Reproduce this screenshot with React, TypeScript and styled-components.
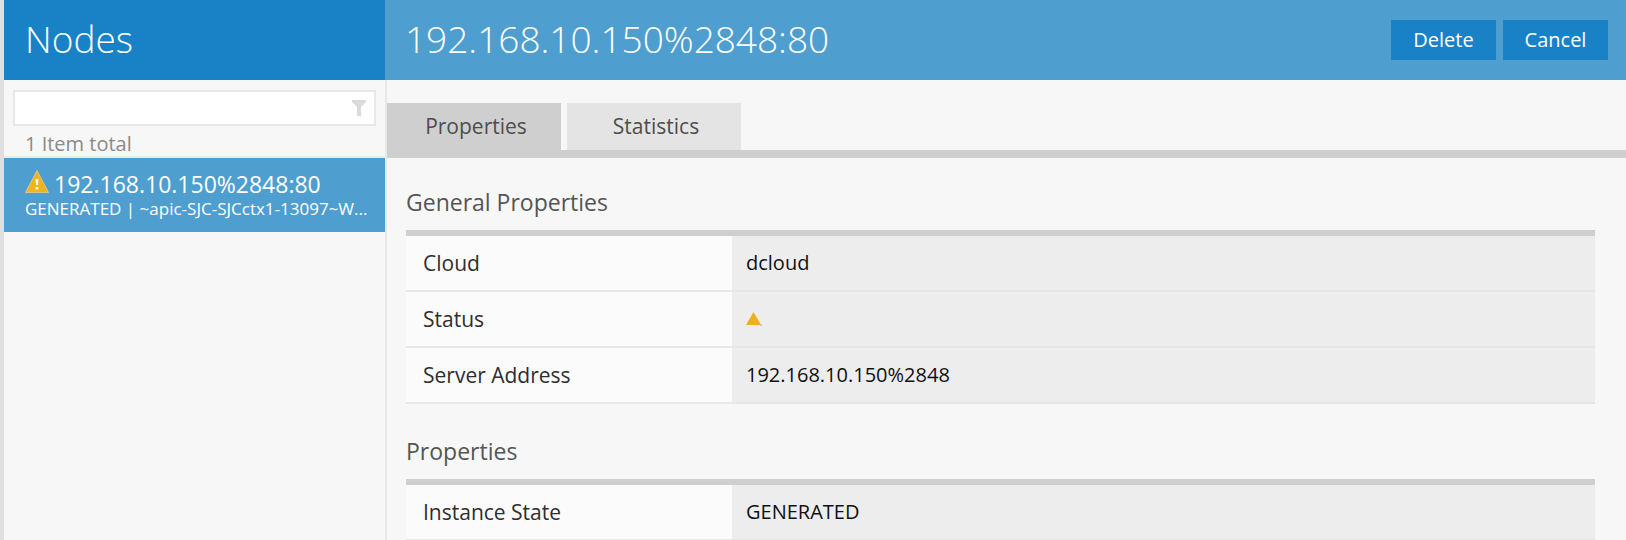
import React from "react";
import styled, { createGlobalStyle } from "styled-components";

const GlobalStyle = createGlobalStyle`
  *, *::before, *::after { box-sizing: border-box; }
  html, body { margin: 0; height: 100%; background: #f7f7f7; }
  body { overflow: hidden; font-family: "Open Sans", "Noto Sans", sans-serif; }
  #root { height: 100%; }
`;

const Page = styled.div`
  display: flex;
  height: 100vh;
  overflow: hidden;
  border-left: 4px solid #dfdfdf;
  background: #f7f7f7;
`;

const Sidebar = styled.aside`
  display: flex;
  flex-direction: column;
  flex: 0 0 381px;
  min-width: 0;
`;

const HeaderBar = styled.header<{ $tone: "dark" | "light" }>`
  display: flex;
  align-items: center;
  justify-content: space-between;
  height: 80px;
  padding: 0 18px 0 ${(p) => (p.$tone === "dark" ? "21px" : "20px")};
  background: ${(p) => (p.$tone === "dark" ? "#1982c7" : "#4e9ed0")};
`;

const Title = styled.h1`
  margin: 0;
  padding-bottom: 2px;
  color: #fff;
  font-size: 37px;
  font-weight: 300;
  line-height: 48px;
  white-space: nowrap;
`;

const SidebarBody = styled.div`
  flex: 1;
  border-right: 2px solid #e8e8e8;
  margin-right: -2px;
`;

const FilterBox = styled.div`
  display: flex;
  align-items: center;
  height: 36px;
  margin: 10px 9px 0 9px;
  padding-right: 8px;
  border: 2px solid #e8e8e8;
  background: #fff;
`;

const FilterInput = styled.input`
  flex: 1;
  min-width: 0;
  height: 32px;
  padding: 0 10px;
  border: 0;
  outline: 0;
  background: transparent;
  font: 400 18px "Open Sans", sans-serif;
`;

const ItemCount = styled.p`
  height: 32px;
  margin: 0;
  padding: 6px 21px 0;
  border-bottom: 2px solid #ebebeb;
  color: #8a8a8a;
  font-size: 20px;
  line-height: 24px;
`;

const NodeItem = styled.a`
  display: block;
  height: 74px;
  padding: 12px 10px 0 21px;
  background: #4e9ed0;
  color: #fff;
  text-decoration: none;
`;

const NodeName = styled.span`
  display: flex;
  align-items: flex-start;
  gap: 5px;
  font-size: 23px;
  line-height: 28px;
`;

const NodeInfo = styled.span`
  display: block;
  font-size: 17px;
  line-height: 22px;
  white-space: nowrap;
`;

const Main = styled.main`
  flex: 1;
  min-width: 0;
`;

const Actions = styled.div`
  display: flex;
  gap: 7px;
`;

const ActionButton = styled.button`
  width: 105px;
  height: 40px;
  padding: 0 0 2px;
  border: 0;
  background: #1982c7;
  color: #fff;
  font: 400 20px "Open Sans", sans-serif;
`;

const Tabs = styled.div`
  display: flex;
  align-items: stretch;
  gap: 6px;
  height: 55px;
  margin: 23px 0 0 2px;
  border-bottom: 8px solid #cfcfcf;
`;

const Tab = styled.button<{ $active?: boolean }>`
  width: 174px;
  padding: 0 0 2px 4px;
  border: 0;
  background: ${(p) => (p.$active ? "#cfcfcf" : "#e4e4e4")};
  color: #4d4d4d;
  font: 400 21px "Open Sans", sans-serif;
`;

const Section = styled.section`
  margin: 0 31px 0 21px;

  & + & {
    margin-top: 3px;
  }
`;

const SectionTitle = styled.h2`
  margin: 0;
  padding: 30px 0 14px;
  color: #555;
  font-size: 23px;
  font-weight: 400;
  line-height: 28px;
`;

const PropertyTable = styled.table`
  width: 100%;
  border-collapse: separate;
  border-spacing: 0;
  border-top: 6px solid #cfcfcf;
  font-size: 20px;
  line-height: 24px;
  table-layout: fixed;
`;

const PropertyName = styled.th`
  width: 326px;
  height: 56px;
  padding: 0 17px;
  border-bottom: 2px solid #e8e8e8;
  background: #fbfbfb;
  color: #2e2e2e;
  font-size: 21px;
  font-weight: 400;
  text-align: left;
`;

const PropertyValue = styled.td`
  padding: 0 14px;
  border-bottom: 2px solid #e6e6e6;
  background: #ededed;
  color: #111;
`;

const StatusIcon = styled.svg`
  display: block;
`;

const WarningIcon = () => (
  <svg width="24" height="24" viewBox="0 0 24 24" aria-hidden="true">
    <path d="M12 0.500 23.500 22.500H.5Z" fill="#efb51f" stroke="#dcc58a" strokeLinejoin="round" />
    <path d="M10.500 9h3l-.5 6h-2Zm.2 8h2.600v2.500h-2.600Z" fill="#fff8dc" />
  </svg>
);

const FunnelIcon = () => (
  <svg width="14" height="17" viewBox="0 0 14 17" aria-hidden="true">
    <path d="M0 0h14v2l-5 5v9.500l-4-1V7L0 2Z" fill="#dadada" />
  </svg>
);

type Property = { name: string; value: React.ReactNode };

const general: Property[] = [
  { name: "Cloud", value: "dcloud" },
  {
    name: "Status",
    value: (
      <StatusIcon width="16" height="14" viewBox="0 0 16 14" role="img" aria-label="Warning">
        <path d="M7.500 0 15 13H0Z" fill="#ecb21b" />
        <path d="M14.500 12.500h1.500v1.500h-1.500Z" fill="#b5b5b5" />
      </StatusIcon>
    ),
  },
  { name: "Server Address", value: "192.168.10.150%2848" },
];

const details: Property[] = [{ name: "Instance State", value: "GENERATED" }];

const PropertySection = ({ title, rows }: { title: string; rows: Property[] }) => (
  <Section>
    <SectionTitle>{title}</SectionTitle>
    <PropertyTable>
      <tbody>
        {rows.map((row) => (
          <tr key={row.name}>
            <PropertyName scope="row">{row.name}</PropertyName>
            <PropertyValue>{row.value}</PropertyValue>
          </tr>
        ))}
      </tbody>
    </PropertyTable>
  </Section>
);

export default function App() {
  return (
    <>
      <GlobalStyle />
      <Page>
        <Sidebar>
          <HeaderBar $tone="dark">
            <Title>Nodes</Title>
          </HeaderBar>
          <SidebarBody>
            <FilterBox>
              <FilterInput type="text" aria-label="Filter nodes" />
              <FunnelIcon />
            </FilterBox>
            <ItemCount>1 Item total</ItemCount>
            <NodeItem href="#node">
              <NodeName>
                <WarningIcon />
                192.168.10.150%2848:80
              </NodeName>
              <NodeInfo>GENERATED | ~apic-SJC-SJCctx1-13097~W...</NodeInfo>
            </NodeItem>
          </SidebarBody>
        </Sidebar>
        <Main>
          <HeaderBar $tone="light">
            <Title as="h2">192.168.10.150%2848:80</Title>
            <Actions>
              <ActionButton type="button">Delete</ActionButton>
              <ActionButton type="button">Cancel</ActionButton>
            </Actions>
          </HeaderBar>
          <Tabs role="tablist">
            <Tab type="button" role="tab" aria-selected="true" $active>
              Properties
            </Tab>
            <Tab type="button" role="tab" aria-selected="false">
              Statistics
            </Tab>
          </Tabs>
          <PropertySection title="General Properties" rows={general} />
          <PropertySection title="Properties" rows={details} />
        </Main>
      </Page>
    </>
  );
}
